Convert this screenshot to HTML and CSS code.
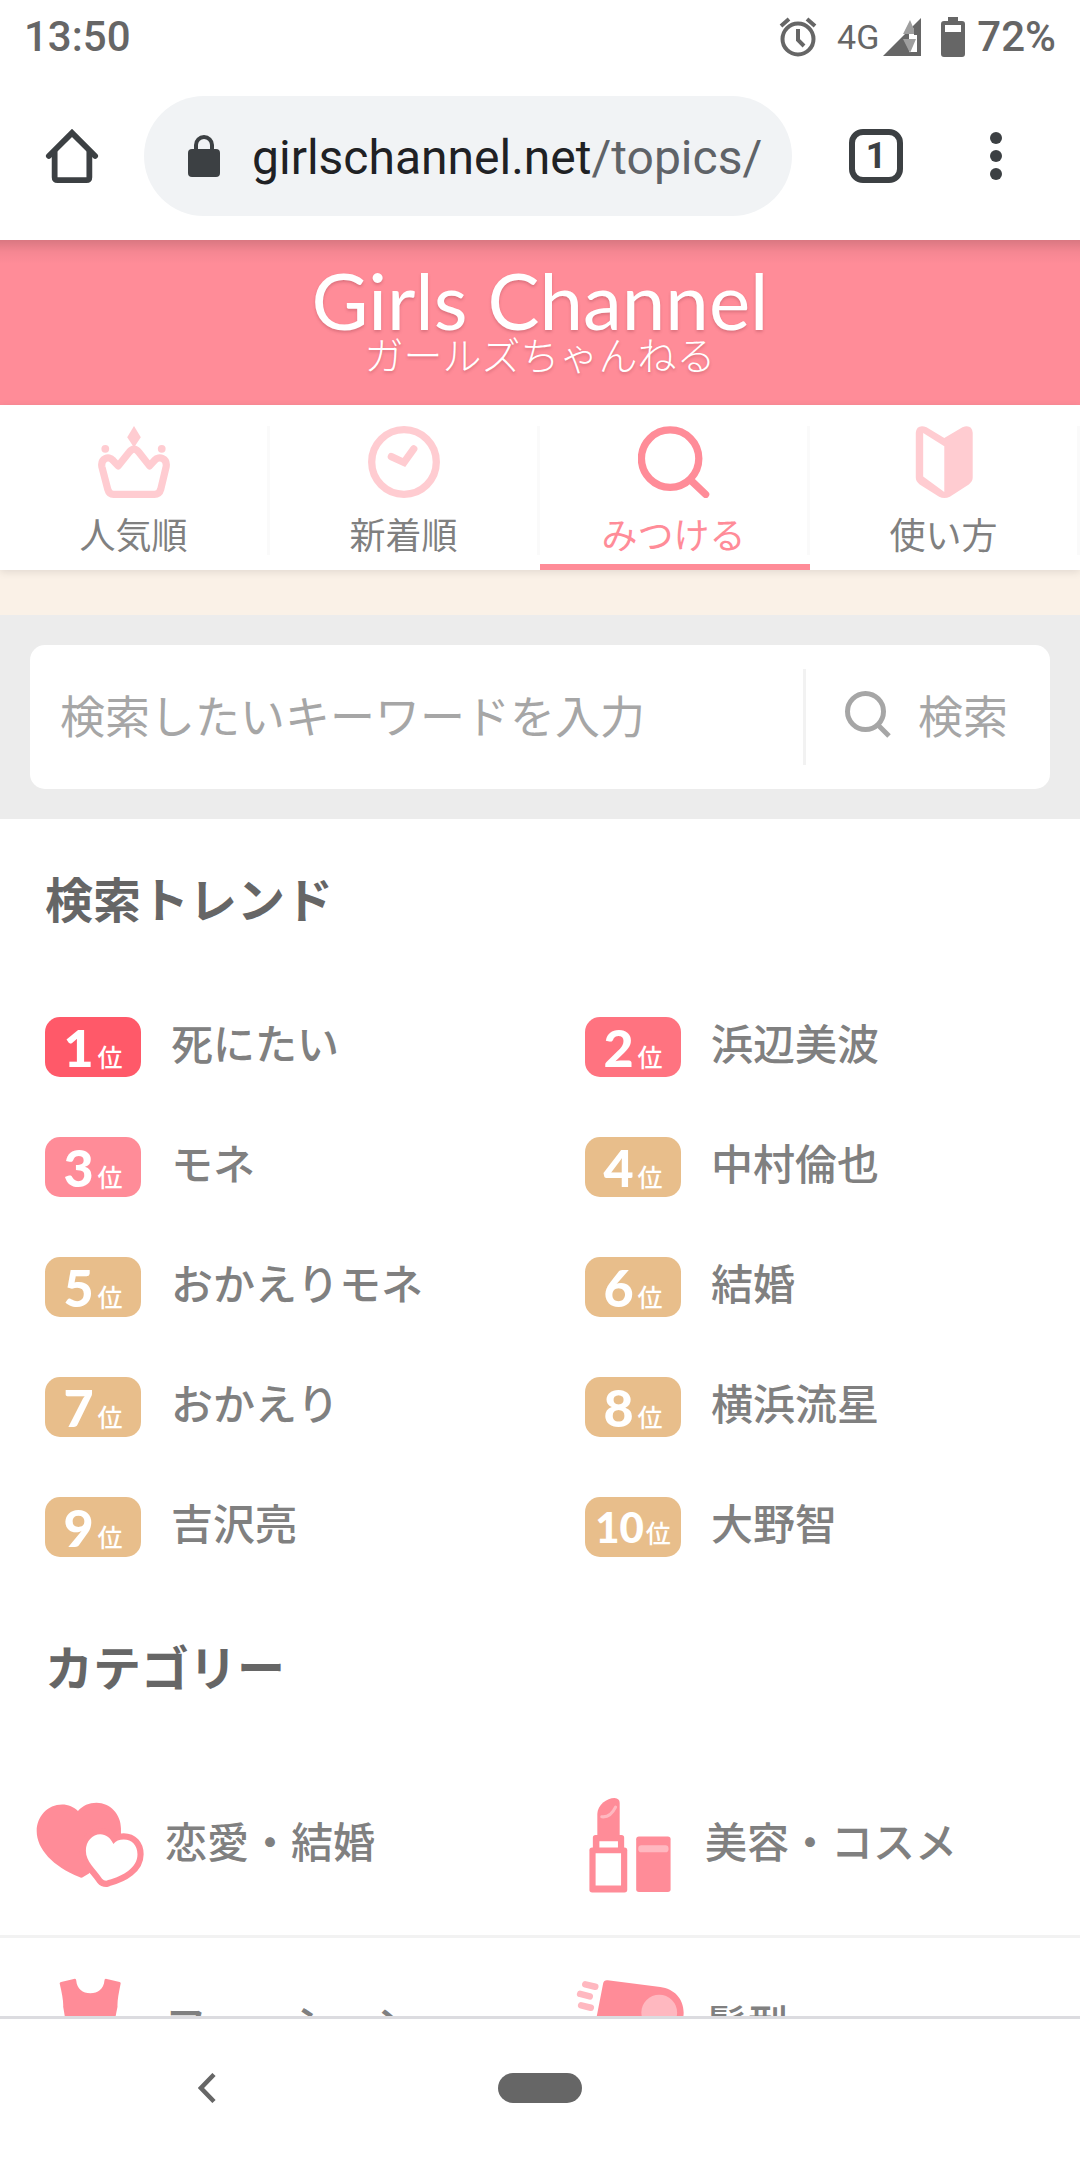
FILE: index.html
```html
<!DOCTYPE html>
<html lang="ja">
<head>
    <meta charset="UTF-8">
    <meta name="viewport" content="width=device-width, initial-scale=1.0">
    <title>ガールズちゃんねる - みつける</title>
    <link rel="stylesheet" href="styles.css">
</head>
<body>
    <!-- ステータスバー -->
    <div class="status-bar">
        <span class="clock">13:50</span>
        <div class="status-icons">
            <svg class="alarm" viewBox="0 0 38 40" width="38" height="40" fill="none" stroke="#666" stroke-width="4">
                <circle cx="19" cy="22" r="15.5"/>
                <path d="M19 12v11l6 6M2 9l8-7M36 9l-8-7"/>
            </svg>
            <span class="network">4G</span>
            <svg class="signal" viewBox="0 0 38 40" width="38" height="40">
                <path d="M38 1v38H0z" fill="#666"/>
                <path d="M26 15l8-6v26h-8z" fill="#fff"/>
                <path d="M27 3l6 14H20zM20 22h13l-6 14z" fill="#9e9e9e"/>
                <path d="M31 9l3-3v12h-3z" fill="#666"/>
            </svg>
            <svg class="battery" viewBox="0 0 24 40" width="24" height="40">
                <path d="M7 0h10v4h4q3 0 3 3v30q0 3-3 3H3q-3 0-3-3V7q0-3 3-3h4z" fill="#666"/>
                <path d="M4 8h16v7H4z" fill="#fff"/>
            </svg>
            <span class="percent">72%</span>
        </div>
    </div>

    <!-- ブラウザのツールバー -->
    <div class="toolbar">
        <button class="tool-btn home-btn" aria-label="ホーム">
            <svg viewBox="0 0 54 56" width="54" height="54" fill="none" stroke="#3c4043" stroke-width="6" stroke-linecap="round">
                <path d="M3 28L27 4l24 24"/>
                <path d="M9 24v26q0 3 3 3h30q3 0 3-3V24"/>
            </svg>
        </button>
        <div class="url-bar">
            <svg class="lock" viewBox="0 0 32 42" width="32" height="42">
                <rect y="14" width="32" height="28" rx="4" fill="#3c4043"/>
                <path d="M8 16v-6a8 8 0 0 1 16 0v6" fill="none" stroke="#3c4043" stroke-width="4"/>
            </svg>
            <span class="url">girlschannel.net<span class="url-path">/topics/3</span></span>
        </div>
        <button class="tool-btn tab-btn" aria-label="タブ"><span class="tab-count">1</span></button>
        <button class="tool-btn menu-btn" aria-label="メニュー">
            <svg viewBox="0 0 12 48" width="12" height="48" fill="#3c4043">
                <circle cx="6" cy="6" r="6"/>
                <circle cx="6" cy="24" r="6"/>
                <circle cx="6" cy="42" r="6"/>
            </svg>
        </button>
    </div>

    <div class="page">
        <header class="site-header">
            <a class="logo" href="#">
                <span class="logo-en">Girls Channel</span>
                <span class="logo-ja">ガールズちゃんねる</span>
            </a>
        </header>

        <nav class="global-nav">
            <a class="nav-item" href="#">
                <svg viewBox="0 0 74 74" width="72" height="72" fill="#ffccd1">
                    <path d="M37 0l7 11.5L37 22l-7-10.5z"/>
                    <circle cx="7.5" cy="23.5" r="4"/>
                    <circle cx="65.5" cy="23.5" r="4"/>
                    <path d="M16 70.3Q11.500 70.300 10 65L4 42C2.500 33 11.500 30.500 15 35L20.700 41 32 27Q37 20.500 42 27L53 41l5.500-6C62.500 30.500 71.500 33 70 42l-5.500 23Q63 70.300 58 70.300z" fill="none" stroke="#ffccd1" stroke-width="7.400" stroke-linejoin="round"/>
                </svg>
                <span>人気順</span>
            </a>
            <a class="nav-item" href="#">
                <svg viewBox="0 0 74 74" width="72" height="72" fill="none" stroke="#ffccd1" stroke-width="7.500" stroke-linecap="round">
                    <circle cx="37" cy="37" r="33.200"/>
                    <path d="M24 31.500l13 6 10-14"/>
                </svg>
                <span>新着順</span>
            </a>
            <a class="nav-item active" href="#">
                <svg viewBox="0 0 74 74" width="72" height="72" fill="none" stroke="#ff8c98" stroke-width="7.500" stroke-linecap="round">
                    <circle cx="33" cy="33.500" r="29.500"/>
                    <path d="M54.500 56L69.500 70.300"/>
                </svg>
                <span>みつける</span>
            </a>
            <a class="nav-item" href="#">
                <svg viewBox="-8 0 74 74" width="72" height="72" fill="#ffccd1" fill-rule="evenodd">
                    <path d="M29.300 12.400L11 1.200Q1-2 0 7v46q0 4 4 7l20 12.800q5.300 2.400 11 0L54.500 60q4-3 4-7V7q-1-9-10.500-5.800zM7.600 7.200L29.300 20.700v47.100L7.600 52z"/>
                </svg>
                <span>使い方</span>
            </a>
        </nav>

        <div class="notice"></div>

        <form class="search-area">
            <div class="search-box">
                <input type="text" class="search-input" placeholder="検索したいキーワードを入力" aria-label="検索キーワード">
                <button type="button" class="search-btn">
                    <svg viewBox="0 0 46 48" width="46" height="48" fill="none" stroke="#a6a6a6" stroke-width="5">
                        <circle cx="20.500" cy="21.500" r="18"/>
                        <path d="M33 35l11 11"/>
                    </svg>
                    検索
                </button>
            </div>
        </form>

        <main>
            <h2>検索トレンド</h2>
            <ul class="trend-list">
                <li><a href="#"><span class="rank rank1"><b>1</b>位</span>死にたい</a></li>
                <li><a href="#"><span class="rank rank2"><b>2</b>位</span>浜辺美波</a></li>
                <li><a href="#"><span class="rank rank3"><b>3</b>位</span>モネ</a></li>
                <li><a href="#"><span class="rank"><b>4</b>位</span>中村倫也</a></li>
                <li><a href="#"><span class="rank"><b>5</b>位</span>おかえりモネ</a></li>
                <li><a href="#"><span class="rank"><b>6</b>位</span>結婚</a></li>
                <li><a href="#"><span class="rank"><b>7</b>位</span>おかえり</a></li>
                <li><a href="#"><span class="rank"><b>8</b>位</span>横浜流星</a></li>
                <li><a href="#"><span class="rank"><b>9</b>位</span>吉沢亮</a></li>
                <li><a href="#"><span class="rank rank10"><b>10</b>位</span>大野智</a></li>
            </ul>

            <h2>カテゴリー</h2>
            <ul class="category-list">
                <li><a href="#">
                    <svg viewBox="0 9 314 348" width="108" height="120">
                        <path d="M122 84C110 72 94 65 76 65C34 65 2 100 2 142C2 195 50 245 126 276Q132 280 137 276L154 266L247 155V135C247 93 215 60 176 60C154 60 136 68 122 84z" fill="#ff8c98"/>
                        <path class="small-heart" d="M225 180C216 162 203 152 187 152C164 152 145 172 145 200C145 232 172 252 192 281Q197 287 204 287L210 285C256 273 295 248 295 210C295 184 279 167 255 167C242 167 232 171 225 180z"/>
                    </svg>
                    <span>恋愛・結婚</span>
                </a></li>
                <li><a href="#">
                    <svg viewBox="0 0 314 348" width="108" height="120" fill="#ff8c98">
                        <path d="M62 154V84C62 57 90 37 112 37Q127 38 127 51V154z"/>
                        <rect x="49" y="145" width="91" height="58" rx="8"/>
                        <rect x="39" y="181" width="110" height="131" rx="8"/>
                        <rect x="175" y="149" width="100" height="162" rx="8"/>
                        <path d="M68 163h54v18H68zM57 198h74v94H57z" fill="#fff"/>
                        <rect x="181" y="175" width="88" height="20" rx="9" fill="#ffb8c0"/>
                        <path d="M75 92Q100 95 115 64" fill="none" stroke="#ffb8c0" stroke-width="9" stroke-linecap="round"/>
                    </svg>
                    <span>美容・コスメ</span>
                </a></li>
                <li><a href="#">
                    <svg viewBox="0 -12 314 348" width="108" height="120" fill="#ff8c98">
                        <path d="M73 28L113 19Q117 19 117 24C119 48 136 61 158 61C180 61 197 48 199 24Q199 19 203 19L243 28Q247 29 246 33C240 62 236 85 237 100Q231 128 228 150L270 320H46L87 150Q84 128 79 100C80 85 76 62 69 33Q68 29 73 28z"/>
                    </svg>
                    <span>ファッション</span>
                </a></li>
                <li><a href="#">
                    <svg viewBox="0 0 314 348" width="108" height="120" fill="#ff8c98">
                        <path d="M92 35L245 55C285 60 313 89 313 129C313 166 285 200 245 200L190 199L210 305H150L130 190L62 177Q56 175 58 152L79 44Q81 34 92 35z"/>
                        <circle cx="242" cy="129" r="52" fill="#ffb8c0"/>
                        <path d="M27 47l29 7M12 75l28 7M15 108l28 7" fill="none" stroke="#ffb8c0" stroke-width="19" stroke-linecap="round"/>
                    </svg>
                    <span>髪型</span>
                </a></li>
            </ul>
        </main>
    </div>

    <!-- 端末のナビゲーションバー -->
    <div class="system-nav">
        <button class="back-btn" aria-label="戻る">
            <svg viewBox="0 0 18 30" width="18" height="30" fill="none" stroke="#666" stroke-width="4.500">
                <path d="M16 1.500L3 15l13 13.500"/>
            </svg>
        </button>
        <button class="home-pill" aria-label="ホーム"></button>
    </div>
</body>
</html>
```
FILE: styles.css
```css
* {
    box-sizing: border-box;
}
body {
    margin: 0;
    height: 100vh;
    display: flex;
    flex-direction: column;
    overflow: hidden;
    background: #fff;
    color: #808080;
    font-family: 'Noto Sans CJK JP', sans-serif;
}
a {
    color: inherit;
    text-decoration: none;
}
button {
    padding: 0;
    border: none;
    background: none;
    font-family: inherit;
    cursor: pointer;
}
svg {
    display: block;
    flex-shrink: 0;
}
ul {
    list-style: none;
    margin: 0;
    padding: 0;
}

/* ステータスバー */
.status-bar {
    display: flex;
    flex-shrink: 0;
    justify-content: space-between;
    align-items: center;
    height: 72px;
    padding: 2px 24px 0;
    font-family: Roboto, sans-serif;
    font-size: 42px;
    font-weight: 500;
    line-height: 52px;
    color: #666;
}
.status-icons {
    display: flex;
    align-items: center;
}
.network {
    margin: 0 4px 0 20px;
    font-size: 34px;
    font-weight: 400;
}
.battery {
    margin: 0 12px 0 20px;
}

/* ツールバー */
.toolbar {
    display: flex;
    flex-shrink: 0;
    align-items: center;
    height: 168px;
    padding-right: 48px;
    font-family: Roboto, sans-serif;
}
.tool-btn {
    display: flex;
    flex-shrink: 0;
    justify-content: center;
    align-items: center;
    height: 120px;
}
.home-btn {
    width: 144px;
}
.tab-btn {
    width: 168px;
}
.menu-btn {
    width: 72px;
}
.url-bar {
    display: flex;
    flex: 1;
    align-items: center;
    min-width: 0;
    height: 120px;
    padding: 0 30px 0 44px;
    border-radius: 60px;
    background: #f1f3f5;
}
.lock {
    margin-right: 32px;
}
.url {
    overflow: hidden;
    padding-top: 4px;
    white-space: nowrap;
    font-size: 48px;
    line-height: 64px;
    color: #202124;
}
.url-path {
    color: #5f6368;
}
.tab-count {
    width: 54px;
    height: 54px;
    border: 6px solid #3c4043;
    border-radius: 14px;
    font-family: Roboto, sans-serif;
    font-size: 36px;
    font-weight: 700;
    line-height: 42px;
    color: #3c4043;
}

/* ページ本体 */
.page {
    flex: 1;
    min-height: 0;
    overflow: hidden;
}
.site-header {
    height: 165px;
    padding-top: 24px;
    background: linear-gradient(rgba(0, 0, 0, 0.15), rgba(0, 0, 0, 0.04) 12px, transparent 24px) #ff8c98;
    text-align: center;
    color: #fff;
}
.logo {
    display: inline-flex;
    flex-direction: column;
    align-items: center;
    text-shadow: 0 2px 3px rgba(120, 40, 50, 0.25);
}
.logo-en {
    font-family: Lato, sans-serif;
    font-size: 78px;
    line-height: 72px;
}
.logo-ja {
    font-size: 39px;
    font-weight: 300;
    line-height: 34px;
}
.global-nav {
    position: relative;
    display: flex;
    padding: 21px 0 15px;
    background: #fff;
    box-shadow: 0 2px 8px rgba(0, 0, 0, 0.1);
}
.nav-item {
    position: relative;
    display: flex;
    flex: 1;
    flex-direction: column;
    align-items: center;
    height: 129px;
    border-right: 3px solid #fafafa;
    font-size: 36px;
    line-height: 40px;
}
.nav-item span {
    margin-top: 15px;
}
.nav-item.active {
    color: #ff8c98;
}
.nav-item.active::after {
    content: "";
    position: absolute;
    left: 0;
    right: -3px;
    bottom: -15px;
    height: 6px;
    background: #ff8c98;
}
.notice {
    height: 45px;
    background: #faf1e7;
}

/* 検索 */
.search-area {
    padding: 30px;
    background: #ececec;
}
.search-box {
    display: flex;
    align-items: center;
    height: 144px;
    border-radius: 15px;
    background: #fff;
}
.search-input {
    flex: 1;
    min-width: 0;
    height: 96px;
    padding: 0 30px 6px;
    border: none;
    outline: none;
    background: none;
    font-family: inherit;
    font-size: 45px;
    color: #808080;
}
.search-input::placeholder {
    color: #a6a6a6;
    opacity: 1;
}
.search-btn {
    display: flex;
    align-items: center;
    gap: 27px;
    height: 96px;
    padding: 0 42px 6px 39px;
    border-left: 3px solid #f2f2f2;
    font-size: 45px;
    color: #a6a6a6;
}

h2 {
    margin: 40px 45px 52px;
    font-size: 48px;
    font-weight: 700;
    line-height: 76px;
    color: #666;
}

/* 検索トレンド */
.trend-list {
    display: grid;
    grid-template-columns: 1fr 1fr;
}
.trend-list a {
    display: flex;
    align-items: flex-start;
    gap: 30px;
    height: 120px;
    padding: 30px 0 0 45px;
    font-size: 42px;
    font-weight: 500;
    line-height: 50px;
}
.rank {
    display: flex;
    justify-content: center;
    align-items: baseline;
    gap: 4px;
    width: 96px;
    height: 60px;
    border-radius: 15px;
    background: #e8be8b;
    color: #fff;
    font-size: 25px;
    line-height: 60px;
}
.rank b {
    font-family: Lato, sans-serif;
    font-size: 52px;
    font-weight: 900;
}
.rank1 {
    background: #ff5969;
}
.rank2 {
    background: #ff7380;
}
.rank3 {
    background: #ff8c98;
}
.rank10 {
    gap: 2px;
}
.rank10 b {
    font-size: 42px;
}

/* カテゴリー */
.category-list {
    display: grid;
    grid-template-columns: 1fr 1fr;
}
.category-list a {
    display: flex;
    align-items: center;
    gap: 21px;
    height: 183px;
    padding-left: 36px;
    border-bottom: 3px solid #f2f2f2;
    font-size: 42px;
    font-weight: 500;
}
.category-list span {
    padding-bottom: 12px;
}
.small-heart {
    fill: #fff;
    stroke: #ff8c98;
    stroke-width: 36;
    stroke-linejoin: round;
    paint-order: stroke;
}

/* 端末のナビゲーションバー */
.system-nav {
    display: grid;
    flex-shrink: 0;
    grid-template-columns: 1fr auto 1fr;
    align-items: center;
    height: 144px;
    padding-bottom: 4px;
    border-top: 3px solid #dcdce0;
    background: #fff;
}
.back-btn {
    justify-self: center;
    padding: 24px;
    margin-right: 84px;
}
.home-pill {
    width: 84px;
    height: 30px;
    border-radius: 15px;
    background: #666;
}
```
